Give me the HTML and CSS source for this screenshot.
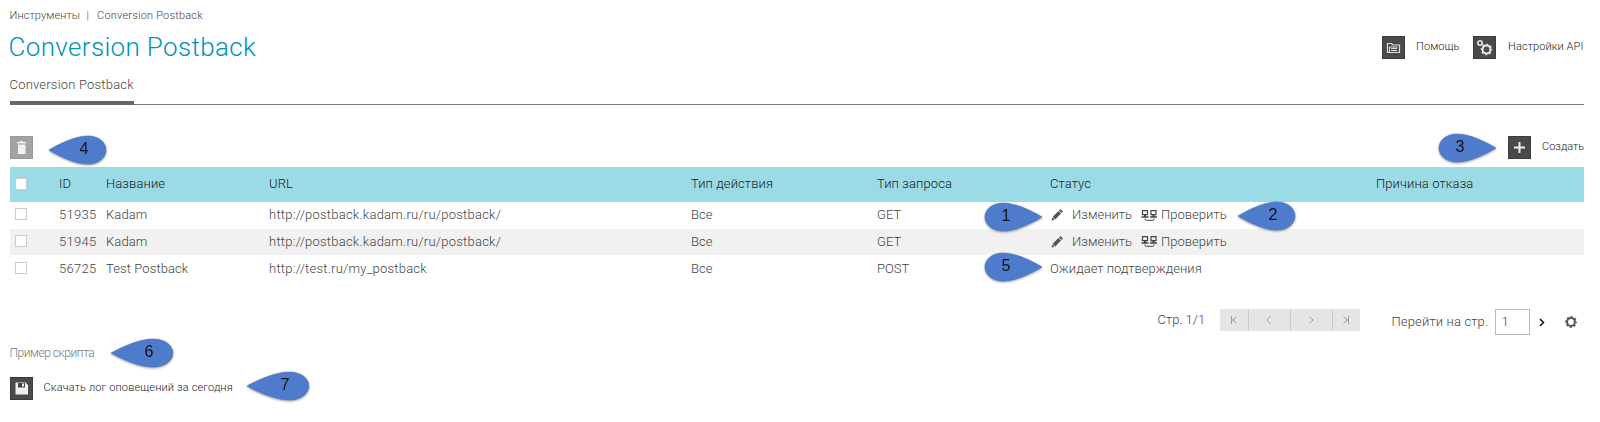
FILE: index.html
```html
<!DOCTYPE html>
<html lang="ru">
<head>
<meta charset="utf-8">
<title>Conversion Postback</title>
<link rel="stylesheet" href="styles.css">
</head>
<body>
<svg class="defs" width="0" height="0">
  <symbol id="gear" viewBox="0 0 12 12"><circle cx="6" cy="6" r="3.900" fill="none" stroke="currentColor" stroke-width="2"/><circle cx="6" cy="6" r="5.200" fill="none" stroke="currentColor" stroke-width="1.400" stroke-dasharray="2.100 1.984" stroke-dashoffset="1"/></symbol>
  <symbol id="pencil" viewBox="0 0 12 12"><path d="M.5 11.500l.8-3.200 2.400 2.400zM1.700 7.800L7.400 2l2.600 2.600-5.700 5.800zM8 1.400L9 .5q.5-.4 1 0l1.500 1.500q.4.5 0 1l-.9 1z" fill="currentColor"/></symbol>
  <symbol id="monitors" viewBox="0 0 17 11"><g fill="none" stroke="currentColor"><path d="M1.500.6h5v4h-5zM10 .6h5v4h-5z" stroke-width="1.200"/><path d="M3 5.500h2M11.500 5.500h2M.5 7h7M9 7h7" stroke-width="1.400"/><path d="M4 8.500v.5q0 1.300 1.300 1.300h6.400q1.300 0 1.300-1.300v-.5"/></g></symbol>
  <symbol id="drop" viewBox="0 0 60 30"><path d="M1 15C11 9 27 1 40 1c11 0 18 6.500 18 14s-7 14-18 14C27 29 11 21 1 15z" fill="#4e7bcb" stroke="#4874c2" stroke-width=".6"/></symbol>
</svg>
<main class="page">
  <nav class="crumbs"><span class="crumb-root">Инструменты</span><span class="sep">|</span><span>Conversion Postback</span></nav>
  <header class="head">
    <h1>Conversion Postback</h1>
    <div class="actions">
      <span class="tile"><svg width="23" height="23"><path d="M5.500 16.500v-9h4l1.500 1.500h6.500v7.500z" fill="none" stroke="#ddd" stroke-width="1.200"/><path d="M7.500 16v-5h8M9 12.500h6M9 14.500h6" fill="none" stroke="#ddd"/></svg></span><span class="small help">Помощь</span>
      <span class="tile"><svg width="23" height="23" color="#e4e4e4"><use href="#gear" x="7.500" y="7.500" width="12" height="12"/><circle cx="7" cy="7" r="2.200" fill="none" stroke="#e4e4e4" stroke-width="1.600"/></svg></span><span class="small api">Настройки API</span>
    </div>
  </header>
  <div class="tabs"><span class="tab">Conversion Postback</span></div>
  <div class="toolbar">
    <span class="tile off"><svg width="23" height="23"><path d="M7 6h3V5h3v1h3v1.500H7zM8 8.500h7.500V18H8z" fill="#f2f2f2"/></svg></span>
    <div class="create"><span class="tile"><svg width="23" height="23"><path d="M11.500 6v11M6 11.500h11" stroke="#eee" stroke-width="2"/></svg></span><span class="small new">Создать</span></div>
  </div>
  <table class="grid">
    <colgroup><col class="c0"><col class="c1"><col class="c2"><col class="c3"><col class="c4"><col class="c5"><col class="c6"><col></colgroup>
    <thead><tr><th><i class="box"></i></th><th>ID</th><th>Название</th><th>URL</th><th>Тип действия</th><th>Тип запроса</th><th>Статус</th><th>Причина отказа</th></tr></thead>
    <tbody>
      <tr><td><i class="box"></i></td><td class="id">51935</td><td class="name">Kadam</td><td class="url">http://postback.kadam.ru/ru/postback/</td><td>Все</td><td>GET</td><td><div class="ops"><svg class="pen" width="12" height="12"><use href="#pencil"/></svg><span class="edit">Изменить</span><svg class="mon" width="17" height="11"><use href="#monitors"/></svg><span>Проверить</span></div></td><td></td></tr>
      <tr><td><i class="box"></i></td><td class="id">51945</td><td class="name">Kadam</td><td class="url">http://postback.kadam.ru/ru/postback/</td><td>Все</td><td>GET</td><td><div class="ops"><svg class="pen" width="12" height="12"><use href="#pencil"/></svg><span class="edit">Изменить</span><svg class="mon" width="17" height="11"><use href="#monitors"/></svg><span>Проверить</span></div></td><td></td></tr>
      <tr><td><i class="box"></i></td><td class="id">56725</td><td class="name">Test Postback</td><td class="url">http://test.ru/my_postback</td><td>Все</td><td>POST</td><td>Ожидает подтверждения</td><td></td></tr>
    </tbody>
  </table>
  <div class="pager">
    <span class="count">Стр. 1/1</span>
    <div class="buttons">
      <span class="narrow"><svg width="8" height="8"><path d="M1.500 0v8M6.500.500L3 4l3.500 3.500M1.500 4H3"/></svg></span><span class="wide"><svg width="8" height="8"><path d="M5.500.500L2 4l3.500 3.500"/></svg></span><span class="wide"><svg width="8" height="8"><path d="M2.500.500L6 4 2.500 7.500"/></svg></span><span class="narrow"><svg width="8" height="8"><path d="M6.500 0v8M1.500.500L5 4 1.500 7.500M5 4h1.500"/></svg></span>
    </div>
    <span class="goto">Перейти на стр.</span>
    <span class="field">1</span>
    <svg class="go" width="6" height="9"><path d="M1 1l3.500 3.500L1 8" fill="none" stroke="#111" stroke-width="1.500"/></svg>
    <svg class="cog" width="12" height="12"><use href="#gear"/></svg>
  </div>
  <div class="sample">Пример скрипта</div>
  <div class="log"><span class="tile"><svg width="23" height="23"><path d="M5.500 5.500h10l2.500 2.500v9.500H5.500z" fill="#eee"/><path d="M8 6h7v4.500H8z" fill="#444"/><path d="M12 6.500h2v3h-2z" fill="#eee"/></svg></span><span class="small dl">Скачать лог оповещений за сегодня</span></div>
</main>
<div class="pin right p1"><svg><use href="#drop"/></svg><b>1</b></div>
<div class="pin p2"><svg><use href="#drop"/></svg><b>2</b></div>
<div class="pin right p3"><svg><use href="#drop"/></svg><b>3</b></div>
<div class="pin p4"><svg><use href="#drop"/></svg><b>4</b></div>
<div class="pin right p5"><svg><use href="#drop"/></svg><b>5</b></div>
<div class="pin long p6"><svg preserveAspectRatio="none" viewBox="0 0 60 30"><use href="#drop" width="60" height="30"/></svg><b>6</b></div>
<div class="pin long p7"><svg preserveAspectRatio="none" viewBox="0 0 60 30"><use href="#drop" width="60" height="30"/></svg><b>7</b></div>
</body>
</html>
```
FILE: styles.css
```css
* { box-sizing: border-box; }
body { margin: 0; width: 1600px; height: 422px; overflow: hidden; position: relative; background: #fff; color: #444; font: 300 13px/16px Roboto, "Noto Sans", sans-serif; white-space: nowrap; }
svg { display: block; flex: none; }
.defs { position: absolute; }
.page { padding: 7px 16px 0 9.500px; }
.crumbs { display: flex; height: 16px; font-size: 11px; line-height: 17px; letter-spacing: .1px; }
.crumbs span:last-child { letter-spacing: .2px; }
.crumb-root { width: 69px; }
.sep { margin: 0 8px; }
.head { display: flex; justify-content: space-between; height: 52px; }
h1 { margin: 7px 0 0 -1px; font-size: 26px; line-height: 34px; font-weight: 300; letter-spacing: .35px; color: #0092bb; }
.actions { display: flex; margin-top: 13px; }
.tile { display: block; flex: none; width: 23px; height: 23px; background: #4a4a4a; border: 1px solid #3c3c3c; }
.tile svg { margin: -1px; }
.off { background: #a3a3a3; border-color: #999; }
.small { font-size: 11px; line-height: 22px; color: #222; letter-spacing: .1px; }
.help { width: 57px; margin-left: 11px; }
.api { width: 76px; margin-left: 12px; }
.tabs { display: flex; height: 30px; border-bottom: 1px solid #777; }
.tab { width: 124px; height: 30px; border-bottom: 4px solid #666; font-size: 13px; line-height: 19px; letter-spacing: .2px; }
.toolbar { display: flex; justify-content: space-between; height: 62px; padding-top: 31px; }
.create { display: flex; }
.new { width: 42px; margin-left: 11px; letter-spacing: 0; }
.grid { width: 1574.500px; table-layout: fixed; border-collapse: collapse; }
.c0 { width: 49.500px; } .c1 { width: 47px; } .c2 { width: 163px; } .c3 { width: 422px; } .c4 { width: 186px; } .c5 { width: 173px; } .c6 { width: 326px; }
th, td { padding: 0; text-align: left; letter-spacing: .03px; }
th { height: 35px; padding-bottom: 2px; background: #9adbe6; color: #222; font-weight: 300; letter-spacing: .1px; }
th .box { position: relative; top: 1px; }
td { height: 26.670px; }
.id { letter-spacing: .3px; }
.name { letter-spacing: .1px; }
.url { letter-spacing: .24px; }
tbody tr:nth-child(2) { background: #f1f1f1; }
.box { display: block; width: 12px; height: 12px; margin: 0 0 2px 5px; background: #fff; border: 1px solid #ccc; }
.ops { display: flex; align-items: center; }
.pen { margin: 0 9px 0 1px; color: #555; }
.edit { width: 69px; }
.mon { margin-right: 3px; }
.pager { display: flex; margin-top: 27px; height: 27px; padding-left: 1148px; }
.count { width: 62px; line-height: 21px; }
.buttons { display: flex; width: 140px; height: 22.500px; background: #e5e5e5; }
.buttons span { display: flex; align-items: center; justify-content: center; border-left: 1px solid #c8c8c8; }
.buttons span:first-child { border-left: 0; }
.buttons path { fill: none; stroke: #999; }
.narrow { width: 28px; }
.wide { width: 42px; }
.goto { width: 103px; margin-left: 32px; line-height: 26px; letter-spacing: .15px; }
.field { width: 35px; height: 26px; padding-left: 6px; border: 1px solid #bbb; line-height: 24px; }
.go { margin: 9px 0 0 9px; }
.cog { margin: 7px 0 0 20px; color: #555; }
.sample { margin-top: 9px; height: 32px; line-height: 16px; font-size: 12px; letter-spacing: -.45px; color: #777; }
.log { display: flex; }
.dl { margin-left: 11px; letter-spacing: .15px; }
.pin { position: absolute; width: 60px; height: 30px; filter: drop-shadow(0 1px 1px rgba(0,0,0,.4)); }
.pin svg { width: 100%; height: 100%; }
.right svg { transform: scaleX(-1); }
.pin b { position: absolute; left: 29px; top: 5px; width: 14px; text-align: center; font: 16px/18px "Liberation Sans", Arial, sans-serif; color: #111; }
.right b { left: 16px; }
.long { width: 65px; }
.long b { left: 32px; }
.p1 { left: 983px; top: 202px; } .p2 { left: 1237px; top: 201px; } .p3 { left: 1437px; top: 133px; } .p4 { left: 48px; top: 135px; }
.p5 { left: 983px; top: 252px; } .p6 { left: 110px; top: 338px; } .p7 { left: 246px; top: 371px; }
```
